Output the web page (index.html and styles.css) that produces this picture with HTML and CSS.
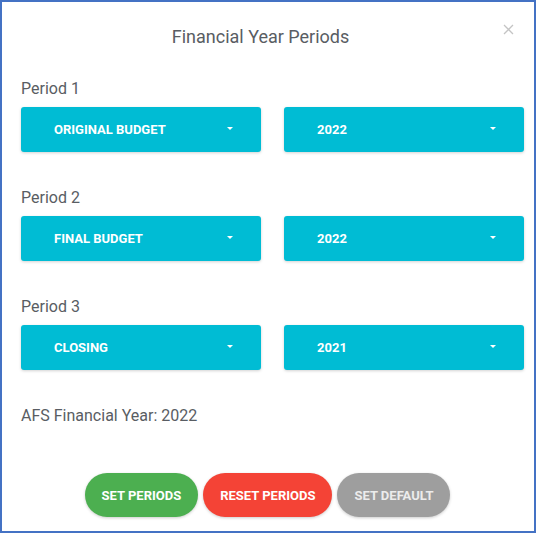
FILE: index.html
```html
<!DOCTYPE html>
<html lang="en">
  <head>
    <meta charset="UTF-8" />
    <title>Financial Year Periods</title>
    <link rel="stylesheet" href="styles.css">
  </head>
  <body>
    <div class="modal">
      <div class="modal-header">
        <h4 class="title">Financial Year Periods</h4>
        <span class="close">
          <svg width="11" height="11" viewBox="0 0 11 11"><path d="M1 1L10 10M10 1L1 10" stroke="#c4c4c4" stroke-width="1.3" fill="none"/></svg>
        </span>
      </div>

      <div class="period">
        <div class="label">Period 1</div>
        <div class="selects">
          <div class="dropdown">ORIGINAL BUDGET<span class="caret"></span></div>
          <div class="dropdown">2022<span class="caret"></span></div>
        </div>
      </div>

      <div class="period">
        <div class="label">Period 2</div>
        <div class="selects">
          <div class="dropdown">FINAL BUDGET<span class="caret"></span></div>
          <div class="dropdown">2022<span class="caret"></span></div>
        </div>
      </div>

      <div class="period">
        <div class="label">Period 3</div>
        <div class="selects">
          <div class="dropdown">CLOSING<span class="caret"></span></div>
          <div class="dropdown">2021<span class="caret"></span></div>
        </div>
      </div>

      <div class="label afs">AFS Financial Year: 2022</div>

      <div class="actions">
        <button class="btn green">SET PERIODS</button>
        <button class="btn red">RESET PERIODS</button>
        <button class="btn grey">SET DEFAULT</button>
      </div>
    </div>
  </body>
</html>
```

FILE: styles.css
```css
body {
  margin: 0;
  font-family: Roboto, "Liberation Sans", sans-serif;
  background-color: #fff;
}
.modal {
  box-sizing: border-box;
  width: 536px;
  height: 533px;
  border: 2px solid #4472c4;
  padding: 0 10px 0 19px;
  background: #fff;
}
.modal-header {
  position: relative;
  height: 77px;
}
.title {
  margin: 0 0 0 -24px;
  padding-top: 24px;
  font-size: 18px;
  font-weight: 400;
  line-height: 21px;
  color: #595d63;
  text-align: center;
}
.close {
  position: absolute;
  right: 10px;
  top: 18px;
}
.label {
  font-size: 16px;
  line-height: 19px;
  color: #595d63;
}
.period {
  margin-bottom: 36px;
}
.period .label {
  margin-bottom: 9px;
}
.selects {
  display: flex;
  gap: 23px;
}
.dropdown {
  position: relative;
  box-sizing: border-box;
  width: 240px;
  height: 45px;
  padding-left: 33px;
  background-color: #00bcd4;
  border-radius: 3px;
  box-shadow: 0 1px 3px rgba(0, 0, 0, 0.18);
  color: #fff;
  font-size: 13px;
  font-weight: 700;
  line-height: 45px;
}
.caret {
  position: absolute;
  right: 28px;
  top: 20px;
  border-left: 3px solid transparent;
  border-right: 3px solid transparent;
  border-top: 3px solid #fff;
}
.afs {
  margin-top: 1px;
}
.actions {
  display: flex;
  justify-content: center;
  gap: 5px;
  margin-top: 48px;
  margin-left: -10px;
}
.btn {
  height: 44px;
  padding: 0 17px;
  border: none;
  border-radius: 22px;
  color: #fff;
  font-family: Roboto, "Liberation Sans", sans-serif;
  font-size: 13px;
  font-weight: 700;
  box-shadow: 0 1px 3px rgba(0, 0, 0, 0.2);
}
.green {
  background-color: #4caf50;
}
.red {
  background-color: #f44336;
}
.grey {
  background-color: #9e9e9e;
  color: #ececec;
}
```
